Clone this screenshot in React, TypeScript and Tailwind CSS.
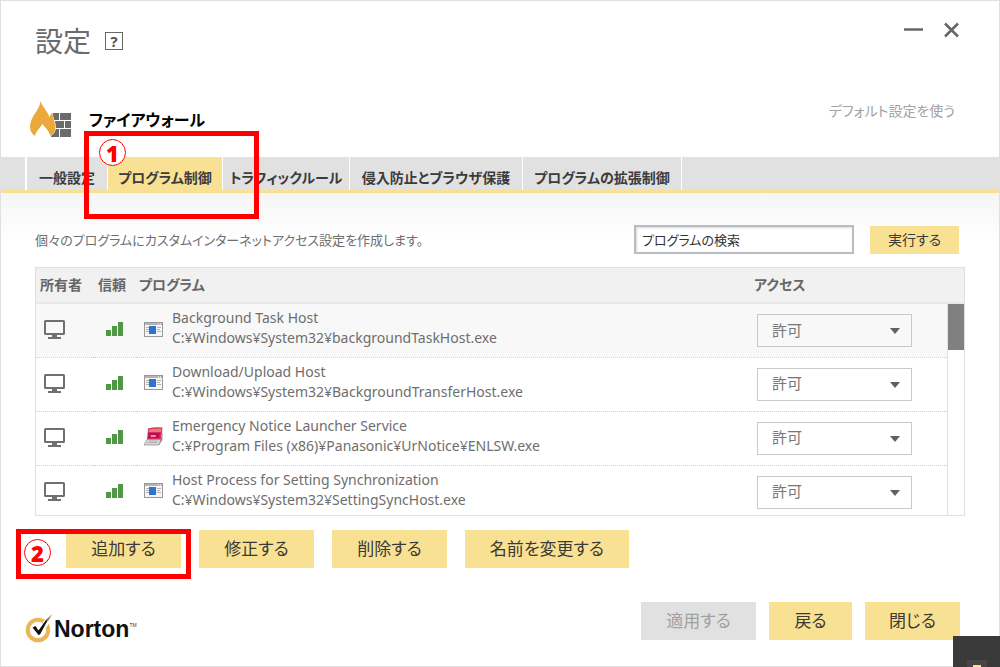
import { useState } from "react";
import { clsx } from "clsx";

type AppIcon = "window" | "notice";

type Program = {
  name: string;
  path: string;
  icon: AppIcon;
};

const TABS = [
  { label: "一般設定", width: "w-[81px]" },
  { label: "プログラム制御", width: "w-[115px]" },
  { label: "トラフィックルール", width: "w-[127px]" },
  { label: "侵入防止とブラウザ保護", width: "w-[173px]" },
  { label: "プログラムの拡張制御", width: "w-[159px]" },
];

const PROGRAMS: Program[] = [
  { name: "Background Task Host", path: "C:¥Windows¥System32¥backgroundTaskHost.exe", icon: "window" },
  { name: "Download/Upload Host", path: "C:¥Windows¥System32¥BackgroundTransferHost.exe", icon: "window" },
  { name: "Emergency Notice Launcher Service", path: "C:¥Program Files (x86)¥Panasonic¥UrNotice¥ENLSW.exe", icon: "notice" },
  { name: "Host Process for Setting Synchronization", path: "C:¥Windows¥System32¥SettingSyncHost.exe", icon: "window" },
];

function FirewallIcon() {
  return (
    <svg width="42" height="37" viewBox="0 0 42 37" aria-hidden="true">
      <path d="M21 12h8v7h-8zM30 12h11v7H30zM25 20h9v7h-9zM35 20h6v7h-6zM21 28h8v8h-8zM30 28h11v8H30z" fill="#6b6b6b" />
      <path
        d="M10 0C11 8 1 14 0 25c0 5 2 8 5 10 1-5 5-8 7.500-12 3 4 6 6 8 12 3-2 5-5 5-9 0-5-3-7-3-14-2 1-3 3-3 5C19 12 14 8 10 0Z"
        fill="#eaa93c"
        stroke="#fff"
        strokeWidth="1"
        paintOrder="stroke"
      />
    </svg>
  );
}

function MonitorIcon() {
  return (
    <svg width="21" height="20" viewBox="0 0 21 20" className="block" aria-hidden="true">
      <rect x="1" y="1" width="19" height="13" rx=".5" fill="none" stroke="#707070" strokeWidth="2" />
      <path d="M8 15h5v2h4v2H4v-2h4z" fill="#707070" />
    </svg>
  );
}

function TrustIcon() {
  return (
    <svg width="17" height="15" viewBox="0 0 17 15" className="block" aria-hidden="true">
      <path d="M0 9h5v6H0zM6 5h5v10H6zM12 1h5v14h-5z" fill="#509846" />
    </svg>
  );
}

function ProgramIcon({ icon }: { icon: AppIcon }) {
  if (icon === "notice") {
    return (
      <svg width="19" height="19" viewBox="0 0 19 19" className="block" aria-hidden="true">
        <path d="M4 1.500Q11-.5 18.500 .5L17 13 3 13Z" fill="#d62f5c" />
        <path d="M5 2.500Q11 1 17.500 1.500L17 5 4.500 5Z" fill="#e77b7b" />
        <path d="M5 6h11l-1 5H4z" fill="#b80d5c" />
        <path d="M7 8h5l-.5 2H6.500z" fill="#ef8fc4" />
        <path d="M3 12.500h14L15 18H0z" fill="#d9d5d6" stroke="#9a9496" strokeWidth=".8" />
        <path d="M17 12.500 18.500 4v9L15 18z" fill="#8d8789" />
        <path d="M5 14h9M4 15.500h9" stroke="#aaa5a7" strokeWidth=".7" />
      </svg>
    );
  }
  return (
    <svg width="19" height="15" viewBox="0 0 19 15" className="block" aria-hidden="true">
      <rect x=".5" y=".5" width="18" height="14" fill="#f6f6f6" stroke="#999" />
      <path d="M1 1h17v2H1z" fill="#b4b4b4" />
      <path d="M14 2h1M16 2h1" stroke="#fff" />
      <path d="M2 5.500h3M2 7.500h3M2 9.500h3M13 5.500h4M13 7.500h3M13 9.500h4" stroke="#b3b3b3" />
      <rect x="5" y="4" width="7" height="8" fill="#2f74d0" />
    </svg>
  );
}

function NortonLogo() {
  return (
    <div className="flex items-center">
      <svg width="29" height="30" viewBox="0 0 29 30" aria-hidden="true">
        <circle cx="13" cy="16" r="10.300" fill="none" stroke="#ebb655" strokeWidth="4" />
        <path d="M19 8.500 26.500 0l1 2L21 12z" fill="#fff" stroke="#fff" strokeWidth="2" />
        <path d="M7.500 13.500 10.500 12l3 4.500L21 6l3.500-3L15 20.500l-1.500.5z" fill="#111" />
        <path d="M21 6 27.500 0 23 7z" fill="#8a8069" />
      </svg>
      <span className="font-['Liberation_Sans',sans-serif] text-[23px] leading-8 font-bold text-[#111]">Norton</span>
      <span className="self-start pt-2 font-['Liberation_Sans',sans-serif] text-[5px] leading-2 text-[#333]">TM</span>
    </div>
  );
}

function ActionButton({ label, width, disabled = false }: { label: string; width: string; disabled?: boolean }) {
  return (
    <button
      type="button"
      disabled={disabled}
      className={clsx(
        "h-[38px] shrink-0 text-[17px] leading-6",
        disabled ? "bg-[#e1e1e1] text-[#a0a0a0]" : "bg-[#f9e193] text-[#3c3a35]",
        width,
      )}
    >
      {label}
    </button>
  );
}

function AccessSelect({ program }: { program: string }) {
  return (
    <div className="relative w-[155px]">
      <select
        aria-label={`${program} アクセス`}
        defaultValue="allow"
        className="block h-[33px] w-full appearance-none border border-[#c9c9c9] bg-transparent pl-[14px] text-[15px] text-[#777]"
      >
        <option value="allow">許可</option>
        <option value="block">遮断</option>
      </select>
      <svg width="10" height="6" viewBox="0 0 10 6" className="pointer-events-none absolute top-[14px] right-3" aria-hidden="true">
        <path d="M0 0h10L5 6z" fill="#606060" />
      </svg>
    </div>
  );
}

function StepNumber({ value, className }: { value: string; className: string }) {
  return (
    <span
      className={clsx(
        "absolute flex size-[27px] items-center justify-center rounded-full border border-[#f00] bg-white text-[22px] leading-6 font-black text-[#f00]",
        className,
      )}
    >
      {value}
    </span>
  );
}

export default function App() {
  const [activeTab, setActiveTab] = useState(1);

  return (
    <div className="relative flex min-h-screen flex-col border border-[#e0e0e0] bg-white font-['Noto_Sans','Noto_Sans_CJK_JP',sans-serif] [font-feature-settings:'palt'] text-[#6e6e6e]">
      <header className="flex items-start justify-between pt-5 pr-10 pl-[34px]">
        <div className="flex items-center gap-[14px]">
          <h1 className="text-[28px] leading-10 text-[#6b6b6b]">設定</h1>
          <button type="button" aria-label="ヘルプ" className="flex size-[18px] items-center justify-center border border-[#666] text-[15px] leading-4 font-bold text-[#555]">
            ?
          </button>
        </div>
        <div className="flex gap-[21px]">
          <button type="button" aria-label="最小化">
            <svg width="19" height="18" viewBox="0 0 19 18" aria-hidden="true">
              <path d="M0 8.500h19" stroke="#666" strokeWidth="2.500" />
            </svg>
          </button>
          <button type="button" aria-label="閉じる">
            <svg width="15" height="18" viewBox="0 0 15 18" aria-hidden="true">
              <path d="M1 2.500l13 13M14 2.500l-13 13" stroke="#666" strokeWidth="2.500" />
            </svg>
          </button>
        </div>
      </header>

      <div className="mt-10 flex items-start justify-between pr-11 pl-[29px]">
        <div className="flex items-center gap-[17px]">
          <FirewallIcon />
          <h2 className="text-base leading-6 font-bold text-black">ファイアウォール</h2>
        </div>
        <a href="#" className="text-sm leading-5 text-[#a3a3a3]">
          デフォルト設定を使う
        </a>
      </div>

      <nav className="mt-[19px] flex h-9 border-b-3 border-[#f9e193] bg-[#e1e1e1] pl-6">
        <div className="flex border-l-2 border-white">
          {TABS.map((tab, i) => (
            <button
              key={tab.label}
              type="button"
              onClick={() => setActiveTab(i)}
              className={clsx(
                "border-r border-white pt-2 text-sm leading-6 font-bold whitespace-nowrap text-[#3c3c3c]",
                i === activeTab && "bg-[#f9e193]",
                tab.width,
              )}
            >
              {tab.label}
            </button>
          ))}
        </div>
      </nav>

      <main className="bg-linear-to-b from-[#f5f5f5] to-white to-[48px] pr-[34px] pl-[34px]">
        <div className="flex items-center pt-8 pr-[6px]">
          <p className="grow text-[13px] leading-5">個々のプログラムにカスタムインターネットアクセス設定を作成します。</p>
          <input
            type="text"
            aria-label="プログラムの検索"
            defaultValue="プログラムの検索"
            className="h-[29px] w-[220px] border-2 border-[#b9bcc1] bg-white px-[6px] text-[13px] leading-5 text-[#333] shadow-[inset_1px_1px_2px_#d5d9e0]"
          />
          <button type="button" className="ml-4 h-7 w-[89px] bg-[#f9e193] text-sm leading-5 text-[#3c3a35]">
            実行する
          </button>
        </div>

        <div className="mt-[13px] border border-[#e0e0e0]">
          <table className="w-full table-fixed border-collapse text-sm">
            <colgroup>
              <col className="w-[58px]" />
              <col className="w-[42px]" />
              <col />
              <col className="w-[193px]" />
              <col className="w-[17px]" />
            </colgroup>
            <thead>
              <tr className="h-[35px] border-b-2 border-[#e8e8e8] bg-[#f1f1f1] text-left text-[#666]">
                <th className="pl-1 whitespace-nowrap">所有者</th>
                <th className="pl-1 whitespace-nowrap">信頼</th>
                <th className="pl-[3px]">プログラム</th>
                <th>アクセス</th>
                <td />
              </tr>
            </thead>
            <tbody>
              {PROGRAMS.map((program, i) => {
                const last = i === PROGRAMS.length - 1;
                const cell = clsx(!last && "border-b border-dotted border-[#cfcfcf]", i === 0 && "bg-[#f8f8f8]");
                return (
                  <tr key={program.path} className={clsx("align-top", last ? "h-[50px]" : "h-[54px]")}>
                    <td className={clsx("pt-4 pl-2", cell)}>
                      <MonitorIcon />
                    </td>
                    <td className={clsx("pt-[17px] pl-3", cell)}>
                      <TrustIcon />
                    </td>
                    <td className={clsx("pt-1 pl-2", cell)}>
                      <div className="flex gap-[9px]">
                        <div className="flex h-[42px] items-center">
                          <ProgramIcon icon={program.icon} />
                        </div>
                        <div className="leading-5">
                          <div>{program.name}</div>
                          <div>{program.path}</div>
                        </div>
                      </div>
                    </td>
                    <td className={clsx("pt-[10px] pl-[3px]", cell)}>
                      <AccessSelect program={program.name} />
                    </td>
                    {i === 0 && (
                      <td rowSpan={PROGRAMS.length} className="border-l border-[#e0e0e0] bg-white">
                        <div className="h-[46px] bg-[#808080]" />
                      </td>
                    )}
                  </tr>
                );
              })}
            </tbody>
          </table>
        </div>
      </main>

      <div className="mt-[14px] flex gap-[18px] pl-[65px]">
        <ActionButton label="追加する" width="w-[115px]" />
        <ActionButton label="修正する" width="w-[115px]" />
        <ActionButton label="削除する" width="w-[115px]" />
        <ActionButton label="名前を変更する" width="w-[164px]" />
      </div>

      <footer className="mt-[34px] flex items-start justify-between pr-[39px] pl-6">
        <div className="pt-[11px]">
          <NortonLogo />
        </div>
        <div className="flex gap-[13px]">
          <ActionButton label="適用する" width="w-[115px]" disabled />
          <ActionButton label="戻る" width="w-[83px]" />
          <ActionButton label="閉じる" width="w-[95px]" />
        </div>
      </footer>

      {/* step markers drawn over the window */}
      <div className="pointer-events-none absolute top-[130px] left-[83px] h-[88px] w-[175px] border-5 border-[#f00]" />
      <StepNumber value="1" className="top-[138px] left-[98px]" />
      <div className="pointer-events-none absolute top-[528px] left-[15px] h-[50px] w-[175px] border-5 border-[#f00]" />
      <StepNumber value="2" className="top-[538px] left-[23px]" />

      <div className="absolute -right-px -bottom-px flex h-[31px] w-[47px] items-end justify-center bg-[#3a3a3a]">
        <div className="flex h-[7px] w-5 items-end justify-center bg-[#464646]">
          <div className="h-[2px] w-2 bg-[#f9e193]" />
        </div>
      </div>
    </div>
  );
}
